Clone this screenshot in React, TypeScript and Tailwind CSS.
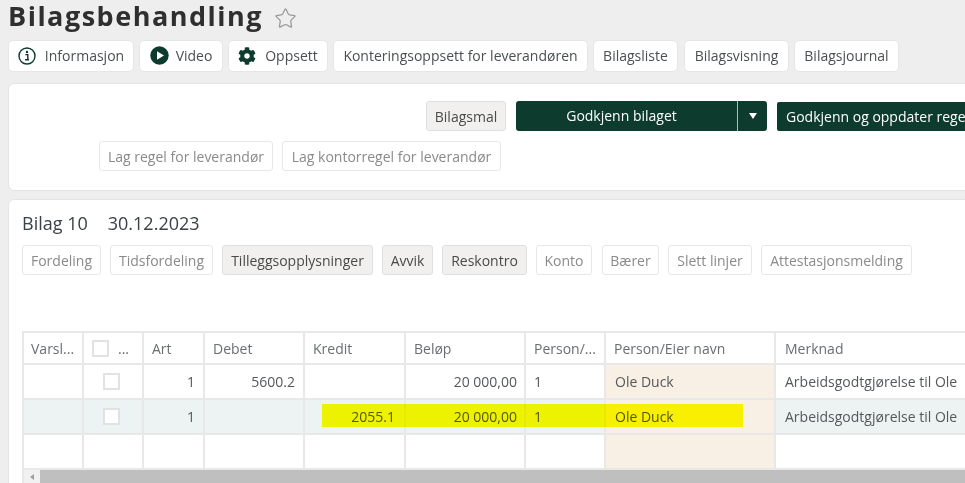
import React from "react";
import { FaCog } from "react-icons/fa";
import { Star } from "lucide-react";

const GREEN = "#0d3b2e";

function TopBtn({ w, icon, children, gap = "gap-[6px]" }: { w: string; icon?: React.ReactNode; children: React.ReactNode; gap?: string }) {
  return (
    <div className={`${w} h-[32px] shrink-0 flex items-center justify-center ${gap} pb-[1px] bg-white rounded-[5px] border border-[#e6e6e6] text-[14px] text-[#4a4f52]`}>
      {icon}
      <span>{children}</span>
    </div>
  );
}

function Ghost({ w, children }: { w: string; children: React.ReactNode }) {
  return (
    <div className={`${w} h-[30px] shrink-0 flex items-center justify-center bg-white rounded-[3px] border border-[#e8e8e8] text-[14px] text-[#8a8a8a]`}>
      {children}
    </div>
  );
}

function Solid({ w, children }: { w: string; children: React.ReactNode }) {
  return (
    <div className={`${w} h-[30px] shrink-0 flex items-center justify-center bg-[#f1f0ee] rounded-[3px] border border-[#e0e0e0] text-[14px] text-[#4a4a4a]`}>
      {children}
    </div>
  );
}

const cols = "grid grid-cols-[60px_60px_61px_100px_101px_120px_80px_170px_200px]";
const cell = "border-r-2 border-[#e8e8e8] flex items-center min-w-0 whitespace-nowrap";

function Row({ tinted, debet, kredit, filled }: { tinted?: boolean; debet?: string; kredit?: string; filled?: boolean }) {
  const bg = tinted ? "bg-[#edf2f2]" : "bg-white";
  return (
    <div className={`${cols} h-[35px] border-b-2 border-[#e8e8e8] text-[14px] text-[#55585a]`}>
      <div className={`${cell} ${bg}`} />
      <div className={`${cell} ${bg} justify-center pr-[4px]`}>
        {filled && <div className="w-[17px] h-[17px] bg-white border-2 border-[#e2e2e2]" />}
      </div>
      <div className={`${cell} ${bg} justify-end pr-[8px]`}>{filled ? "1" : ""}</div>
      <div className={`${cell} ${bg} justify-end pr-[8px]`}>{debet}</div>
      <div className={`${cell} ${bg} justify-end pr-[9px]`}>{kredit}</div>
      <div className={`${cell} ${bg} justify-end pr-[7px]`}>{filled ? "20 000,00" : ""}</div>
      <div className={`${cell} ${bg} pl-[8px]`}>{filled ? "1" : ""}</div>
      <div className={`${cell} bg-[#f8f0e4] pl-[9px]`}>{filled ? "Ole Duck" : ""}</div>
      <div className={`${cell} ${bg} border-r-0 pl-[9px]`}>{filled ? "Arbeidsgodtgjørelse til Ole" : ""}</div>
    </div>
  );
}

export default function App() {
  return (
    <div className="relative w-[965px] h-[483px] overflow-hidden bg-[#eeeeee] font-['Open_Sans',sans-serif]">
      <div className="pl-[8px] h-[40px] flex items-center gap-[11px] pb-[8px]">
        <h1 className="text-[27px] font-bold tracking-[1.5px] text-[#2f2f2f] leading-[32px]">Bilagsbehandling</h1>
        <Star size={23} strokeWidth={1.3} className="text-[#9a9a9a] mt-[5px]" />
      </div>
      <div className="pl-[8px] flex gap-[5px]">
        <TopBtn
          w="w-[126px]"
          gap="gap-[9px]"
          icon={
            <svg width="18" height="18" viewBox="0 0 18 18" fill="none">
              <circle cx="9" cy="9" r="8" stroke={GREEN} strokeWidth="1.4" />
              <circle cx="9" cy="5" r="1.2" fill={GREEN} />
              <path d="M7.3 7.6H9.8V12.6H11M7 12.8H11" stroke={GREEN} strokeWidth="1.4" />
            </svg>
          }
        >
          Informasjon
        </TopBtn>
        <TopBtn
          w="w-[84px]"
          gap="gap-[7px]"
          icon={
            <svg width="19" height="19" viewBox="0 0 19 19">
              <circle cx="9.5" cy="9.5" r="9.2" fill={GREEN} />
              <path d="M7 5.2L14 9.5L7 13.8Z" fill="#fff" />
            </svg>
          }
        >
          Video
        </TopBtn>
        <TopBtn w="w-[100px]" gap="gap-[9px]" icon={<FaCog size={18} color={GREEN} />}>
          Oppsett
        </TopBtn>
        <TopBtn w="w-[255px]">Konteringsoppsett for leverandøren</TopBtn>
        <TopBtn w="w-[85px]">Bilagsliste</TopBtn>
        <TopBtn w="w-[105px] ml-[1px]">Bilagsvisning</TopBtn>
        <TopBtn w="w-[105px]">Bilagsjournal</TopBtn>
      </div>

      <div className="ml-[8px] mt-[11px] w-[1000px] h-[108px] bg-white rounded-l-[6px] border border-[#e4e4e4] pt-[17px]">
        <div className="flex items-center pl-[417px]">
          <Solid w="w-[80px]">Bilagsmal</Solid>
          <div className="ml-[10px] w-[251px] h-[30px] shrink-0 flex rounded-[3px] bg-[#0d3b2e] text-white text-[14px] font-medium">
            <div className="w-[222px] flex items-center justify-center border-r border-[#a9bdb6] pb-[1px] pr-[10px]">Godkjenn bilaget</div>
            <div className="flex-1 flex items-center justify-center">
              <div className="w-0 h-0 border-l-[4.5px] border-r-[4.5px] border-t-[6px] border-l-transparent border-r-transparent border-t-white" />
            </div>
          </div>
          <div className="ml-[10px] h-[29px] shrink-0 w-[240px] pl-[9px] flex items-center rounded-[2px] bg-[#0d3b2e] text-white text-[14px] font-medium whitespace-nowrap">
            Godkjenn og oppdater regel
          </div>
        </div>
        <div className="flex gap-[9px] pl-[90px] mt-[10px]">
          <Ghost w="w-[174px]">Lag regel for leverandør</Ghost>
          <Ghost w="w-[219px]">Lag kontorregel for leverandør</Ghost>
        </div>
      </div>

      <div className="ml-[8px] mt-[8px] w-[1000px] h-[300px] bg-white rounded-tl-[6px] border border-[#e4e4e4] pl-[13px] pt-[10px]">
        <div className="flex gap-[20px] h-[26px] items-center text-[18px] text-[#3b4144] leading-[24px]">
          <span>Bilag 10</span>
          <span>30.12.2023</span>
        </div>
        <div className="flex gap-[9px] mt-[9px]">
          <Ghost w="w-[79px]">Fordeling</Ghost>
          <Ghost w="w-[103px]">Tidsfordeling</Ghost>
          <Solid w="w-[151px]">Tilleggsopplysninger</Solid>
          <Solid w="w-[51px]">Avvik</Solid>
          <Solid w="w-[85px]">Reskontro</Solid>
          <Ghost w="w-[56px]">Konto</Ghost>
          <Ghost w="w-[57px] ml-[1px]">Bærer</Ghost>
          <Ghost w="w-[84px]">Slett linjer</Ghost>
          <Ghost w="w-[151px]">Attestasjonsmelding</Ghost>
        </div>
        <div className="mt-[56px] border-l-2 border-t-2 border-[#e8e8e8] w-[990px]">
          <div className={`${cols} h-[32px] border-b-2 border-[#e8e8e8] text-[14px] text-[#6a6e70]`}>
            <div className={`${cell} pl-[7px]`}>Varsl...</div>
            <div className={`${cell} pl-[8px] gap-[8px]`}>
              <div className="w-[17px] h-[17px] shrink-0 border-2 border-[#e2e2e2]" />
              <span className="pl-[1px]">...</span>
            </div>
            <div className={`${cell} pl-[8px]`}>Art</div>
            <div className={`${cell} pl-[8px]`}>Debet</div>
            <div className={`${cell} pl-[8px]`}>Kredit</div>
            <div className={`${cell} pl-[8px]`}>Beløp</div>
            <div className={`${cell} pl-[8px]`}>Person/...</div>
            <div className={`${cell} pl-[8px]`}>Person/Eier navn</div>
            <div className={`${cell} border-r-0 pl-[9px]`}>Merknad</div>
          </div>
          <Row filled debet="5600.2" />
          <Row filled tinted kredit="2055.1" />
          <Row />
          <div className="h-[13px] flex bg-[#f1f1f1]">
            <div className="w-[16px] flex items-center justify-center">
              <div className="w-0 h-0 border-y-[3px] border-r-[4px] border-y-transparent border-r-[#a0a0a0]" />
            </div>
            <div className="flex-1 bg-[#bfbfbf]" />
          </div>
        </div>
      </div>

      <div className="absolute left-[322px] top-[404px] w-[421px] h-[23px] bg-[#ffff00] mix-blend-multiply" />
    </div>
  );
}
